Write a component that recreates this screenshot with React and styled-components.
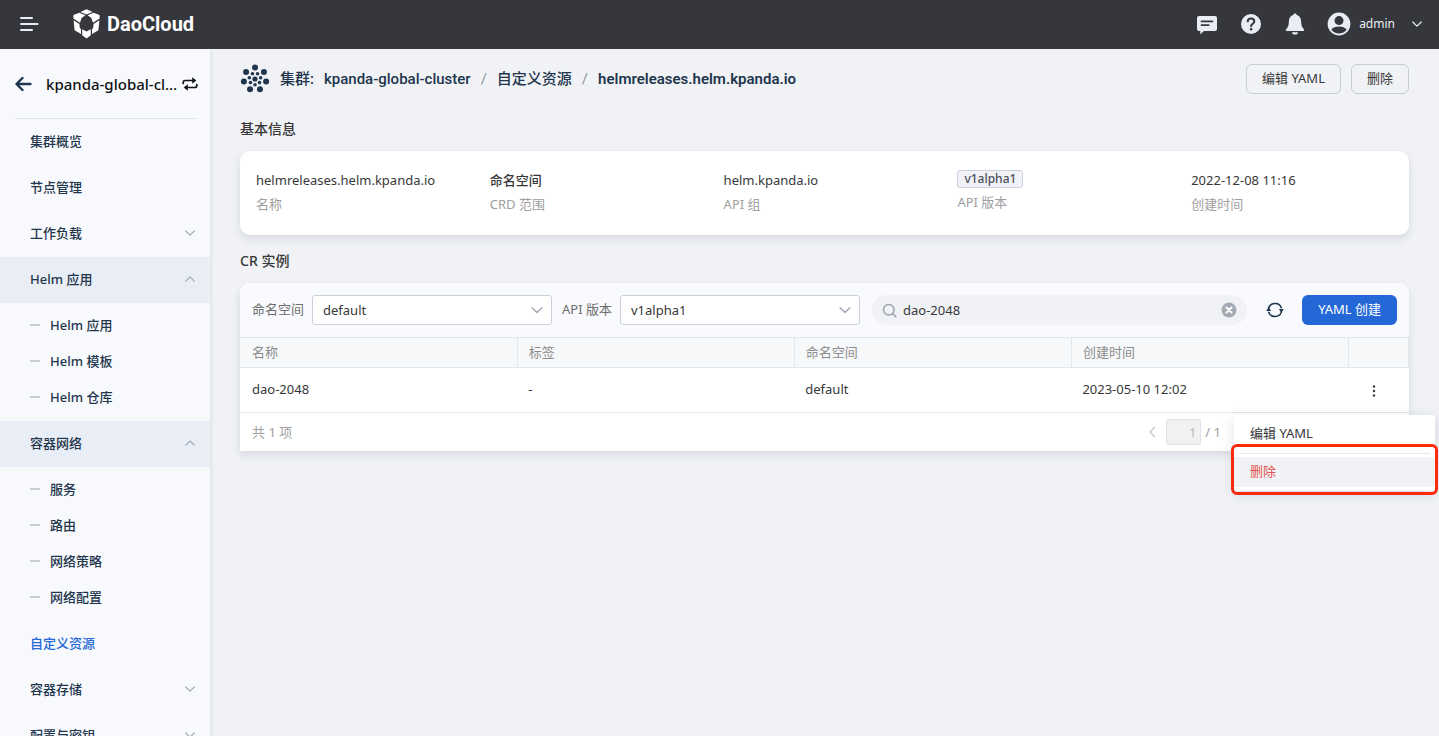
import React, { useState } from "react";

import styled, { createGlobalStyle } from "styled-components";

const GlobalStyle = createGlobalStyle`
* {
box-sizing: border-box;
}
body {
margin: 0;
background-color: #f0f2f6;
color: #383838;
font-family: "Noto Sans", "Noto Sans CJK SC", sans-serif;
font-size: 13px;
line-height: 20px;
}
button, input, select {
font: inherit;
color: inherit;
}
button {
cursor: pointer;
padding: 0;
border: 0;
background: none;
}
a {
color: inherit;
text-decoration: none;
}
svg {
display: block;
flex-shrink: 0;
}
`

const Page = styled.div`
height: 100vh;
display: flex;
flex-direction: column;
overflow: hidden;
`

const TopBar = styled.header`
display: flex;
align-items: center;
flex: 0 0 49px;
padding: 0 16px 2px 20px;
background-color: #36373c;
color: #e9eef5;
`

const Brand = styled.a`
display: flex;
align-items: center;
gap: 7px;
margin-left: 34px;
color: #ffffff;
font-family: Roboto, sans-serif;
font-size: 20px;
font-weight: 700;
line-height: 28px;
`

const TopActions = styled.div`
display: flex;
align-items: center;
gap: 20px;
margin-left: auto;
`

const UserButton = styled.button`
display: flex;
align-items: center;
gap: 8px;
`

const UserName = styled.span`
margin-right: 8px;
font-size: 12px;
`

const Body = styled.div`
display: flex;
flex: 1;
min-height: 0;
`

const Sidebar = styled.nav`
flex: 0 0 210px;
overflow: hidden;
background-color: #f7f9fd;
color: #1f364d;
font-weight: 500;
box-shadow: 1px 0 4px rgba(40, 50, 80, 0.1);
`

const ClusterSwitch = styled.div`
display: flex;
align-items: center;
height: 70px;
margin: 0 12px 0 15px;
border-bottom: 1px solid #e3e6eb;
`

const ClusterName = styled.span`
flex: 1;
margin: 0 4px 0 14px;
overflow: hidden;
white-space: nowrap;
text-overflow: ellipsis;
color: #101215;
font-size: 15px;
`

const NavItem = styled.a`
display: flex;
align-items: center;
justify-content: space-between;
height: 46px;
padding: 0 14px 2px 30px;
background-color: ${props => props.$open ? '#e9eef6' : 'transparent'};
color: ${props => props.$active ? '#2468d8' : '#1f364d'};
`

const SubNav = styled.div`
padding: 4px 0 6px;
`

const SubItem = styled.a`
display: flex;
align-items: center;
gap: 10px;
height: 36px;
padding-left: 30px;

&::before {
content: "";
width: 10px;
height: 2px;
background-color: #c9cdd6;
}
`

const Main = styled.main`
flex: 1;
min-width: 0;
padding: 15px 30px 0;
`

const PageHead = styled.div`
display: flex;
align-items: center;
gap: 10px;
height: 30px;
`

const Crumbs = styled.div`
display: flex;
align-items: center;
gap: 10px;
flex: 1;
color: #1f364d;
font-family: Roboto, "Noto Sans CJK SC", sans-serif;
font-size: 15px;
font-weight: 500;
white-space: nowrap;
`

const Slash = styled.span`
color: #8f959e;
font-weight: 400;
`

const Current = styled.span`
font-weight: 600;
`

const OutlineButton = styled.button`
height: 30px;
padding: 0 15px 2px;
border: 1px solid #c9cbd6;
border-radius: 6px;
`

const PrimaryButton = styled.button`
height: 30px;
padding: 0 16px 2px;
border-radius: 6px;
background-color: #2468d8;
color: #ffffff;
white-space: nowrap;
`

const SectionTitle = styled.h2`
margin: ${props => props.$first ? '25px' : '16px'} 0 12px;
font-size: 14px;
font-weight: 500;
line-height: 20px;
`

const Card = styled.section`
position: relative;
border-radius: 10px 10px ${props => props.$square ? '0 0' : '10px 10px'};
background-color: #ffffff;
box-shadow: 0 4px 8px rgba(30, 40, 60, 0.12);
`

const InfoGrid = styled.dl`
display: grid;
grid-template-columns: repeat(5, 1fr);
height: 84px;
margin: 0;
padding-top: 19px;
`

const InfoItem = styled.div`
display: flex;
flex-direction: column-reverse;
justify-content: flex-end;
align-items: flex-start;
gap: 4px;
padding-left: 16px;
`

const InfoLabel = styled.dt`
color: #a0a0a0;
`

const InfoValue = styled.dd`
margin: 0;
font-weight: ${props => props.$strong ? 500 : 400};
`

const Tag = styled.span`
display: block;
height: 18px;
padding: 0 6px;
border: 1px solid #ccd0de;
border-radius: 3px;
background-color: #f0f2f7;
color: #4b4f5c;
font-size: 12px;
font-weight: 500;
line-height: 16px;
`

const Toolbar = styled.div`
display: flex;
align-items: center;
height: 54px;
padding: 0 12px;
border-radius: 10px 10px 0 0;
background-color: #f9fafd;
`

const FieldLabel = styled.label`
margin-right: 8px;
padding-bottom: 2px;
color: #6e6e6e;
white-space: nowrap;
`

const SelectBox = styled.div`
display: grid;
align-items: center;
width: 240px;
margin-right: ${props => props.$last ? '12px' : '10px'};

> * {
grid-area: 1 / 1;
}
> svg {
justify-self: end;
margin-right: 8px;
pointer-events: none;
}
`

const Select = styled.select`
appearance: none;
width: 100%;
height: 30px;
padding: 0 10px;
border: 1px solid #ccd0de;
border-radius: 3px;
background-color: #ffffff;
`

const SearchBox = styled.div`
display: flex;
align-items: center;
gap: 6px;
flex: 1;
height: 30px;
padding: 0 10px;
border-radius: 15px;
background-color: #f0f2f5;
`

const SearchInput = styled.input`
flex: 1;
min-width: 0;
padding: 0;
border: 0;
outline: 0;
background: none;
`

const RefreshButton = styled.button`
margin: 0 18px 0 19px;
`

const Table = styled.table`
width: 100%;
border-collapse: collapse;
table-layout: fixed;
`

const HeadCell = styled.th`
width: ${props => props.$narrow ? '60px' : 'auto'};
height: 30px;
padding: 0 11px 2px;
border: 1px solid #e4e6ed;
background-color: #f7f8fa;
color: #8c8c8c;
font-weight: 400;
text-align: left;

&:first-child {
padding-left: 12px;
border-left: 0;
}
`

const Cell = styled.td`
height: 45px;
padding: 0 11px 2px;
border-bottom: 1px solid #e4e6ed;

&:first-child {
padding-left: 12px;
}
&:last-child {
padding: 2px 0 0 19px;
}
> button {
display: block;
}
`

const TableFoot = styled.div`
display: flex;
align-items: center;
height: 38px;
padding: 0 12px;
color: #a0a0a0;
`

const Pager = styled.div`
display: flex;
align-items: center;
margin: 0 176px 0 auto;
`

const PageInput = styled.input`
width: 35px;
height: 26px;
margin: 0 4px 0 8px;
padding: 0 4px;
border: 1px solid #e1e2e7;
border-radius: 3px;
background-color: #f1f1f2;
color: #b9b9b9;
text-align: right;
`

const Menu = styled.div`
position: absolute;
top: 132px;
right: -26px;
width: 201px;
padding: 4px 0;
border-radius: 3px;
background-color: #ffffff;
box-shadow: 0 3px 14px rgba(30, 40, 60, 0.14);
`

const MenuItem = styled.button`
display: block;
width: 100%;
height: 30px;
padding: 0 16px 2px;
background-color: ${props => props.$danger ? '#f0f2f6' : 'transparent'};
color: ${props => props.$danger ? '#e5534f' : '#383838'};
text-align: left;
`

const MenuLine = styled.hr`
height: 1px;
margin: 4px 5px 3px;
border: 0;
background-color: #e8e9ed;
`

const Highlight = styled.div`
position: absolute;
top: 29px;
left: -3px;
right: -3px;
height: 51px;
border: 3px solid #fb2b0e;
border-radius: 6px;
pointer-events: none;
`

const Chevron = ({ up, left, size = 12, color = '#a3aab5' }) => (
    <svg width={size} height={size} viewBox="0 0 12 12" fill="none" stroke={color} strokeWidth="1.2" strokeLinecap="round" strokeLinejoin="round">
        <path d={left ? 'M8.5 1.5 4 6l4.5 4.5' : up ? 'M1.8 8.2 6 4l4.2 4.2' : 'M1.8 4 6 8.2 10.2 4'} />
    </svg>
);

const MenuIcon = () => (
    <svg width="19" height="16" viewBox="0 0 19 16" stroke="#e9eef5" strokeWidth="2" strokeLinecap="round">
        <path d="M1 2h11M1 8h16.5M1 14h11" />
    </svg>
);

const Logo = () => (
    <svg width="27" height="30" viewBox="0 0 27 30" fill="#ffffff">
        <path d="M13.5.3 19.6 2.9 13.5 5.500 7.400 2.900Z" />
        <path d="M6.300 3.700 12.400 6.300 8.600 9 7 13.800.4 9.600V6.100Z" />
        <path d="M20.700 3.700 14.600 6.300 18.400 9 20 13.800 26.600 9.600V6.100Z" />
        <path d="M.6 11.200 6.400 15 6.700 18.300 8 20.500V25L1.600 21.300Z" />
        <path d="M26.400 11.200 20.600 15 20.300 18.300 19 20.500V25L25.400 21.300Z" />
        <path d="M9.200 20.300 13.500 22.500 17.800 20.300V26.300L13.500 29.500 9.200 26.300Z" />
    </svg>
);

const MessageIcon = () => (
    <svg width="24" height="24" viewBox="0 0 24 24">
        <path fill="#e9eef5" d="M4 4h16a2 2 0 0 1 2 2v11a2 2 0 0 1-2 2H9l-3.7 3.2V19H4a2 2 0 0 1-2-2V6a2 2 0 0 1 2-2Z" />
        <path stroke="#36373c" strokeWidth="1.7" strokeLinecap="round" d="M6.5 9.4h11M6.5 13.2h7.2" />
    </svg>
);

const HelpIcon = () => (
    <svg width="24" height="24" viewBox="0 0 24 24">
        <circle cx="12" cy="12" r="10" fill="#e9eef5" />
        <path fill="none" stroke="#36373c" strokeWidth="2" strokeLinecap="round" strokeLinejoin="round" d="M8.700 9.300C8.900 7.600 10.200 6.600 12 6.600s3.300 1.100 3.300 2.800c0 2.300-3.200 2.500-3.200 4.800" />
        <circle cx="12.100" cy="17.300" r="1.300" fill="#36373c" />
    </svg>
);

const BellIcon = () => (
    <svg width="24" height="24" viewBox="0 0 24 24" fill="#e9eef5">
        <path d="M12 1.6c1 0 1.5.6 1.7 1.5 2.8.8 4.4 3 4.4 6.2 0 3.9.9 6 2.6 7.6.9.9.6 2-.6 2H3.900c-1.200 0-1.500-1.100-.6-2C5 15.300 5.900 13.200 5.900 9.300c0-3.200 1.600-5.400 4.400-6.200.2-.9.700-1.500 1.700-1.500Z" />
        <path d="M9 20.200h6a3 2.400 0 0 1-6 0Z" />
    </svg>
);

const AccountIcon = () => (
    <svg width="24" height="24" viewBox="0 0 24 24">
        <circle cx="12" cy="12" r="11.400" fill="#e9eef5" />
        <circle cx="12" cy="8.600" r="4.500" fill="#36373c" />
        <path fill="#36373c" d="M4.300 17.600c1.500-2 4.300-3 7.700-3s6.200 1 7.700 3a9.500 9.500 0 0 1-15.400 0Z" />
    </svg>
);

const BackIcon = () => (
    <svg width="17" height="16" viewBox="0 0 17 16" fill="none" stroke="#1f364d" strokeWidth="2.400" strokeLinecap="round" strokeLinejoin="round">
        <path d="M7.500 2 1.500 8l6 6M2 8h13.500" />
    </svg>
);

const SwapIcon = () => (
    <svg width="16" height="14" viewBox="0 0 16 14" fill="none" stroke="#101215" strokeWidth="1.700" strokeLinecap="round">
        <path d="M1.200 6.500V5.600C1.200 4.300 2 3.500 3.300 3.500H11M14.800 7.500v.9c0 1.300-.8 2.100-2.100 2.100H5" />
        <path fill="#101215" stroke="none" d="M10.200.3 14.300 3.500l-4.100 3.200ZM5.800 7.300 1.700 10.500l4.100 3.200Z" />
    </svg>
);

const ring = (count, radius, r, start) => Array.from({ length: count }, (_, i) => {
    const angle = (start + i * 360 / count) * Math.PI / 180;
    return <circle key={`${radius}-${i}`} cx={15 + radius * Math.cos(angle)} cy={15 + radius * Math.sin(angle)} r={r} />;
});

const ClusterIcon = () => (
    <svg width="30" height="30" viewBox="0 0 30 30" fill="#1f364d">
        {ring(7, 11.4, 3, -90)}
        {ring(7, 5.8, 1.8, 90)}
        <circle cx="15" cy="15" r="2.600" />
    </svg>
);

const SearchIcon = () => (
    <svg width="15" height="15" viewBox="0 0 15 15" fill="none" stroke="#9aa3ae" strokeWidth="1.500" strokeLinecap="round">
        <circle cx="6.800" cy="6.800" r="5.300" />
        <path d="m10.800 10.800 3 3" />
    </svg>
);

const ClearIcon = () => (
    <svg width="16" height="16" viewBox="0 0 16 16">
        <circle cx="8" cy="8" r="7.500" fill="#a3aab3" />
        <path stroke="#ffffff" strokeWidth="2" strokeLinecap="round" d="m5.500 5.500 5 5m0-5-5 5" />
    </svg>
);

const RefreshIcon = () => (
    <svg width="18" height="16" viewBox="0 0 18 16" fill="none" stroke="#1f364d" strokeWidth="1.600">
        <path d="M2.300 7.500A6.800 6.800 0 0 1 15.500 6.200M15.700 8.500A6.800 6.800 0 0 1 2.500 9.800" />
        <path fill="#1f364d" stroke="none" d="M.1 9 2.700 5.400 5.200 9ZM12.800 7H17.900L15.300 10.600Z" />
    </svg>
);

const MoreIcon = () => (
    <svg width="12" height="14" viewBox="0 0 12 14" fill="#383838">
        <circle cx="6" cy="2.500" r="1.200" />
        <circle cx="6" cy="7" r="1.200" />
        <circle cx="6" cy="11.500" r="1.200" />
    </svg>
);

const navItems = [
    { label: '集群概览' },
    { label: '节点管理' },
    { label: '工作负载', group: true },
    { label: 'Helm 应用', group: true, children: ['Helm 应用', 'Helm 模板', 'Helm 仓库'] },
    { label: '容器网络', group: true, children: ['服务', '路由', '网络策略', '网络配置'] },
    { label: '自定义资源', active: true },
    { label: '容器存储', group: true },
    { label: '配置与密钥', group: true },
];

const info = [
    { label: '名称', value: 'helmreleases.helm.kpanda.io' },
    { label: 'CRD 范围', value: '命名空间', strong: true },
    { label: 'API 组', value: 'helm.kpanda.io' },
    { label: 'API 版本', value: <Tag>v1alpha1</Tag> },
    { label: '创建时间', value: '2022-12-08 11:16' },
];

const instances = [
    { name: 'dao-2048', labels: '-', namespace: 'default', created: '2023-05-10 12:02' },
];

const App = () => {

    const [search, setSearch] = useState('dao-2048');

    return (
        <Page>
        <GlobalStyle />
        <TopBar>
        <button type="button" aria-label="菜单"><MenuIcon /></button>
        <Brand href="#"><Logo />DaoCloud</Brand>
        <TopActions>
        <button type="button" aria-label="消息"><MessageIcon /></button>
        <button type="button" aria-label="帮助"><HelpIcon /></button>
        <button type="button" aria-label="通知"><BellIcon /></button>
        <UserButton type="button">
            <AccountIcon />
            <UserName>admin</UserName>
            <Chevron color="#e9eef5" />
        </UserButton>
        </TopActions>
        </TopBar>

        <Body>
        <Sidebar>
        <ClusterSwitch>
            <button type="button" aria-label="返回"><BackIcon /></button>
            <ClusterName>kpanda-global-cluster</ClusterName>
            <button type="button" aria-label="切换集群"><SwapIcon /></button>
        </ClusterSwitch>
        {navItems.map(item => (
            <React.Fragment key={item.label}>
            <NavItem href="#" $open={!!item.children} $active={item.active}>
                {item.label}
                {item.group && <Chevron up={!!item.children} />}
            </NavItem>
            {item.children && (
                <SubNav>
                {item.children.map(child => <SubItem href="#" key={child}>{child}</SubItem>)}
                </SubNav>
            )}
            </React.Fragment>
        ))}
        </Sidebar>

        <Main>
        <PageHead>
            <Crumbs>
            <ClusterIcon />
            <span>集群:</span>
            <a href="#">kpanda-global-cluster</a>
            <Slash>/</Slash>
            <a href="#">自定义资源</a>
            <Slash>/</Slash>
            <Current>helmreleases.helm.kpanda.io</Current>
            </Crumbs>
            <OutlineButton type="button">编辑 YAML</OutlineButton>
            <OutlineButton type="button">删除</OutlineButton>
        </PageHead>

        <SectionTitle $first>基本信息</SectionTitle>
        <Card>
        <InfoGrid>
            {info.map(item => (
                <InfoItem key={item.label}>
                <InfoLabel>{item.label}</InfoLabel>
                <InfoValue $strong={item.strong}>{item.value}</InfoValue>
                </InfoItem>
            ))}
        </InfoGrid>
        </Card>

        <SectionTitle>CR 实例</SectionTitle>
        <Card $square>
        <Toolbar>
            <FieldLabel htmlFor="namespace">命名空间</FieldLabel>
            <SelectBox>
            <Select id="namespace" defaultValue="default">
                <option>default</option>
            </Select>
            <Chevron size={14} />
            </SelectBox>
            <FieldLabel htmlFor="version">API 版本</FieldLabel>
            <SelectBox $last>
            <Select id="version" defaultValue="v1alpha1">
                <option>v1alpha1</option>
            </Select>
            <Chevron size={14} />
            </SelectBox>
            <SearchBox>
            <SearchIcon />
            <SearchInput aria-label="搜索" value={search} onChange={event => setSearch(event.target.value)} />
            <button type="button" aria-label="清除" onClick={() => setSearch('')}><ClearIcon /></button>
            </SearchBox>
            <RefreshButton type="button" aria-label="刷新"><RefreshIcon /></RefreshButton>
            <PrimaryButton type="button">YAML 创建</PrimaryButton>
        </Toolbar>
        <Table>
            <thead>
            <tr>
                <HeadCell>名称</HeadCell>
                <HeadCell>标签</HeadCell>
                <HeadCell>命名空间</HeadCell>
                <HeadCell>创建时间</HeadCell>
                <HeadCell $narrow aria-label="操作" />
            </tr>
            </thead>
            <tbody>
            {instances.map(row => (
                <tr key={row.name}>
                <Cell>{row.name}</Cell>
                <Cell>{row.labels}</Cell>
                <Cell>{row.namespace}</Cell>
                <Cell>{row.created}</Cell>
                <Cell><button type="button" aria-label="更多"><MoreIcon /></button></Cell>
                </tr>
            ))}
            </tbody>
        </Table>
        <TableFoot>
            <span>共 {instances.length} 项</span>
            <Pager>
            <button type="button" aria-label="上一页"><Chevron left color="#c4c4c4" /></button>
            <PageInput aria-label="页码" defaultValue="1" disabled />
            <span>/ 1</span>
            </Pager>
        </TableFoot>
        <Menu>
            <MenuItem type="button">编辑 YAML</MenuItem>
            <MenuLine />
            <MenuItem type="button" $danger>删除</MenuItem>
            <Highlight />
        </Menu>
        </Card>
        </Main>
        </Body>
        </Page>
    );
};

export default App;
